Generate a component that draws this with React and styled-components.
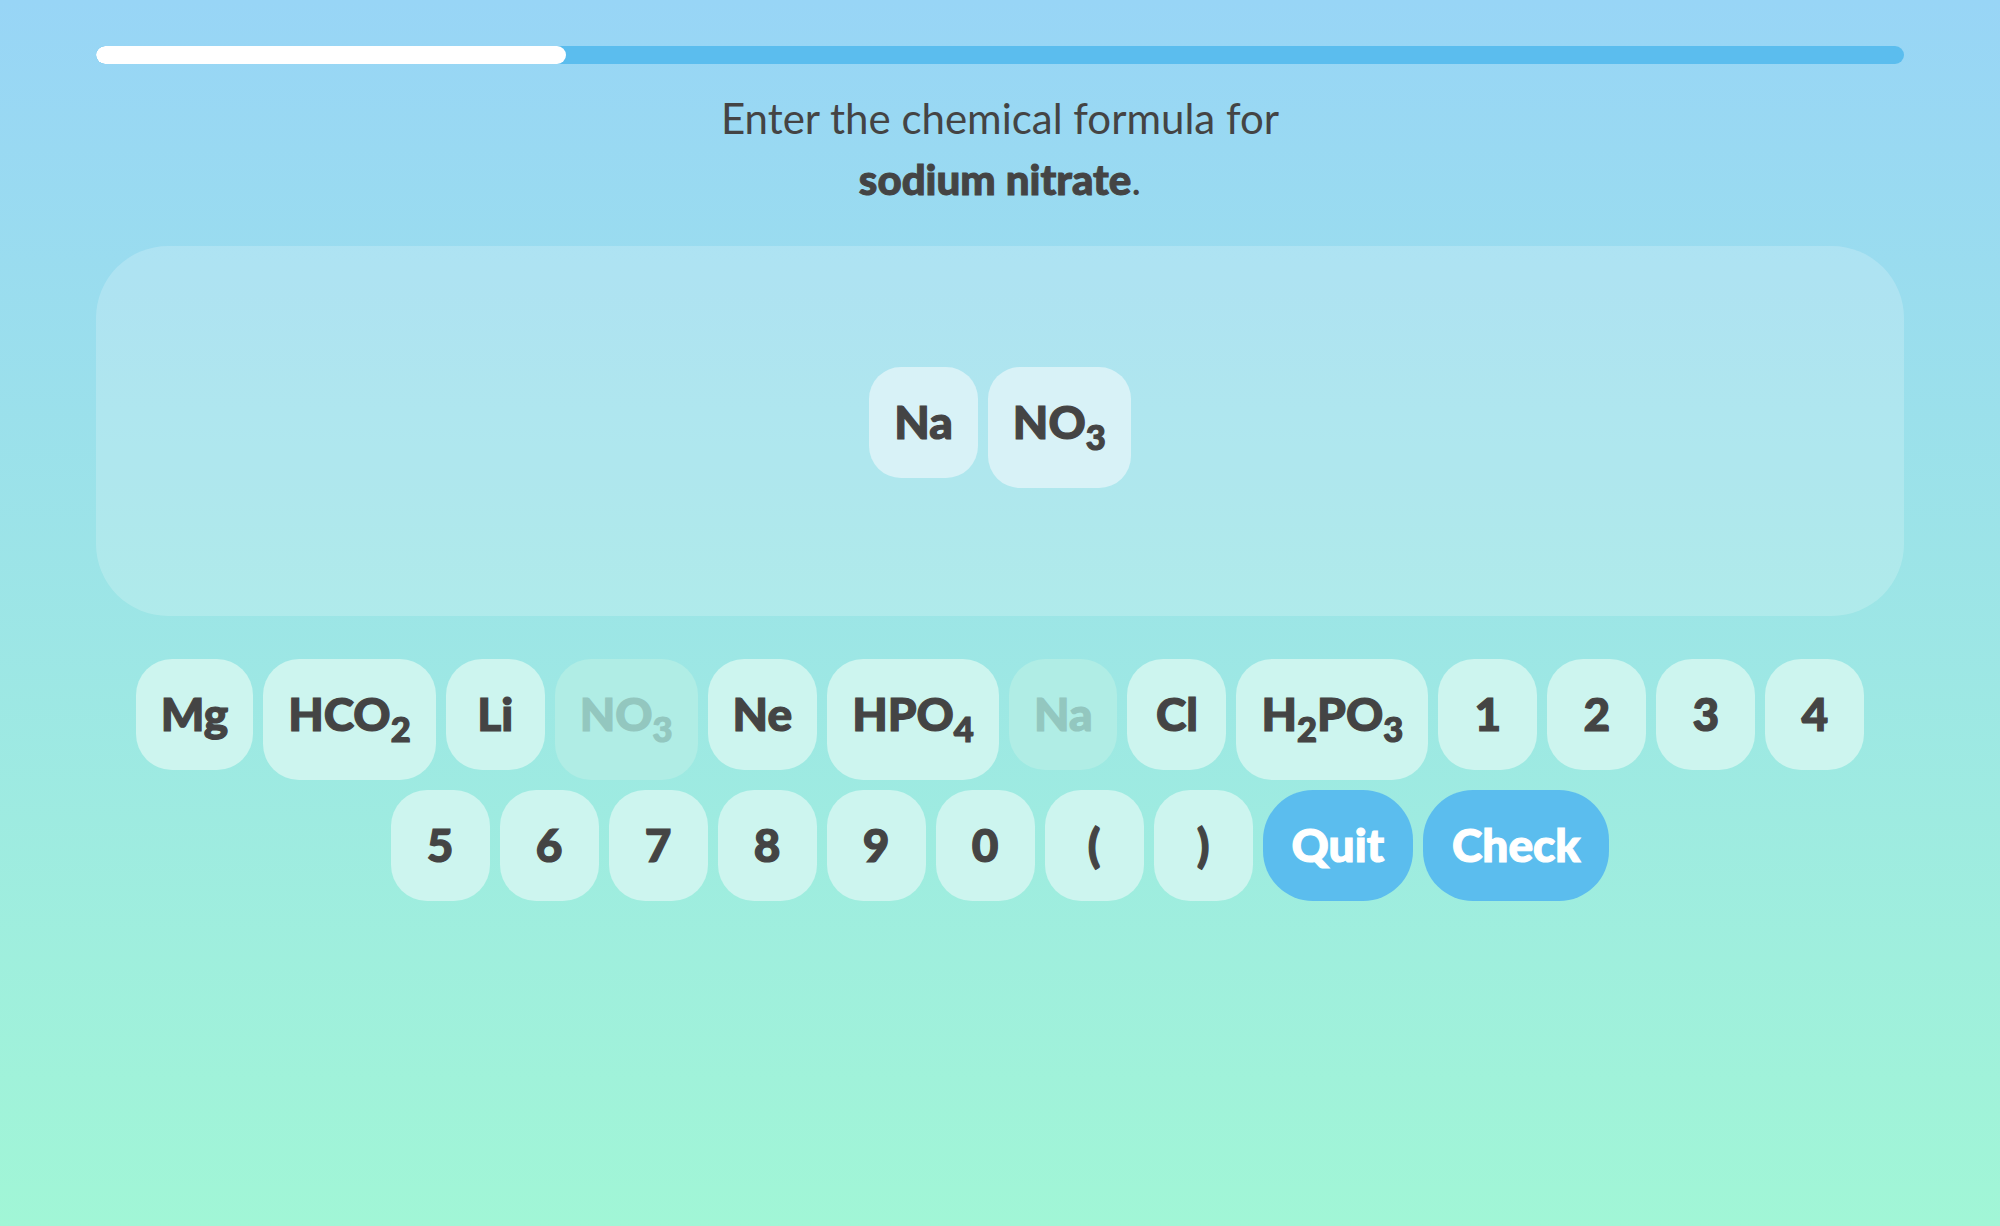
import React from 'react';
import styled, { createGlobalStyle } from 'styled-components';

const answer = [['Na'], ['NO', '3']];

const keys = [
  { parts: ['Mg'] },
  { parts: ['HCO', '2'] },
  { parts: ['Li'] },
  { parts: ['NO', '3'], used: true },
  { parts: ['Ne'] },
  { parts: ['HPO', '4'] },
  { parts: ['Na'], used: true },
  { parts: ['Cl'] },
  { parts: ['H', '2', 'PO', '3'] },
  { parts: ['1'] },
  { parts: ['2'] },
  { parts: ['3'] },
  { parts: ['4'] },
  { parts: ['5'] },
  { parts: ['6'] },
  { parts: ['7'] },
  { parts: ['8'] },
  { parts: ['9'] },
  { parts: ['0'] },
  { parts: ['('] },
  { parts: [')'] },
];

const progress = 0.26;

// odd entries in parts are subscripts
function Formula({ parts }) {
  return parts.map((p, i) => (i % 2 ? <Sub key={i}>{p}</Sub> : <span key={i}>{p}</span>));
}

function App() {
  return (
    <Page>
      <GlobalStyle />
      <Track>
        <Fill style={{ width: `${progress * 100}%` }} />
      </Track>
      <Prompt>
        Enter the chemical formula for
        <br />
        <strong>sodium nitrate</strong>.
      </Prompt>
      <AnswerPanel>
        {answer.map((parts, i) => (
          <AnswerTile key={i}>
            <Formula parts={parts} />
          </AnswerTile>
        ))}
      </AnswerPanel>
      <Keyboard>
        {keys.map((k, i) => (
          <Key key={i} $used={k.used}>
            <Formula parts={k.parts} />
          </Key>
        ))}
        <Key $action>Quit</Key>
        <Key $action>Check</Key>
      </Keyboard>
    </Page>
  );
}

const GlobalStyle = createGlobalStyle`
  body {
    margin: 0;
    font-family: Lato, "Open Sans", sans-serif;
    color: #444;
  }
`;

const Page = styled.main`
  min-height: 100vh;
  box-sizing: border-box;
  padding: 46px 96px 0;
  background: linear-gradient(180deg, #98d5f6 0%, #a1f6d6 100%);
`;

const Track = styled.div`
  height: 18px;
  border-radius: 9px;
  background-color: #5bbdee;
  overflow: hidden;
`;

const Fill = styled.div`
  height: 100%;
  border-radius: 9px;
  background-color: #fff;
`;

const Prompt = styled.h1`
  margin: 24px 0 36px;
  text-align: center;
  font-size: 42px;
  line-height: 61px;
  font-weight: 400;

  strong {
    font-weight: 900;
    -webkit-text-stroke: 1px currentColor;
  }
`;

const AnswerPanel = styled.section`
  height: 370px;
  border-radius: 72px;
  background-color: rgba(255, 255, 255, 0.2);
  display: flex;
  justify-content: center;
  align-items: center;
  gap: 10px;
`;

const tileText = `
  box-sizing: border-box;
  min-width: 99px;
  padding: 32px 25px 33px;
  font-size: 46px;
  line-height: 46px;
  font-weight: 900;
  -webkit-text-stroke: 1.2px currentColor;
  text-align: center;
  white-space: nowrap;
`;

const AnswerTile = styled.div`
  ${tileText}
  align-self: flex-start;
  margin-top: 121px;
  border-radius: 32px;
  background-color: #d8f2f7;
`;

const Keyboard = styled.div`
  margin-top: 38px;
  display: flex;
  flex-wrap: wrap;
  justify-content: center;
  align-items: flex-start;
`;

const Key = styled.div`
  ${tileText}
  margin: 5px;
  padding-left: ${(p) => (p.$action ? '29px' : '25px')};
  padding-right: ${(p) => (p.$action ? '29px' : '25px')};
  border-radius: ${(p) => (p.$action ? '50px' : '36px')};
  background-color: ${(p) => (p.$action ? '#5bbdee' : p.$used ? '#b0ede5' : '#cdf5ef')};
  color: ${(p) => (p.$action ? '#fff' : p.$used ? '#93c7bf' : '#444')};
`;

const Sub = styled.sub`
  font-size: 0.75em;
  line-height: 1;
  vertical-align: -11px;
`;

export default App;
